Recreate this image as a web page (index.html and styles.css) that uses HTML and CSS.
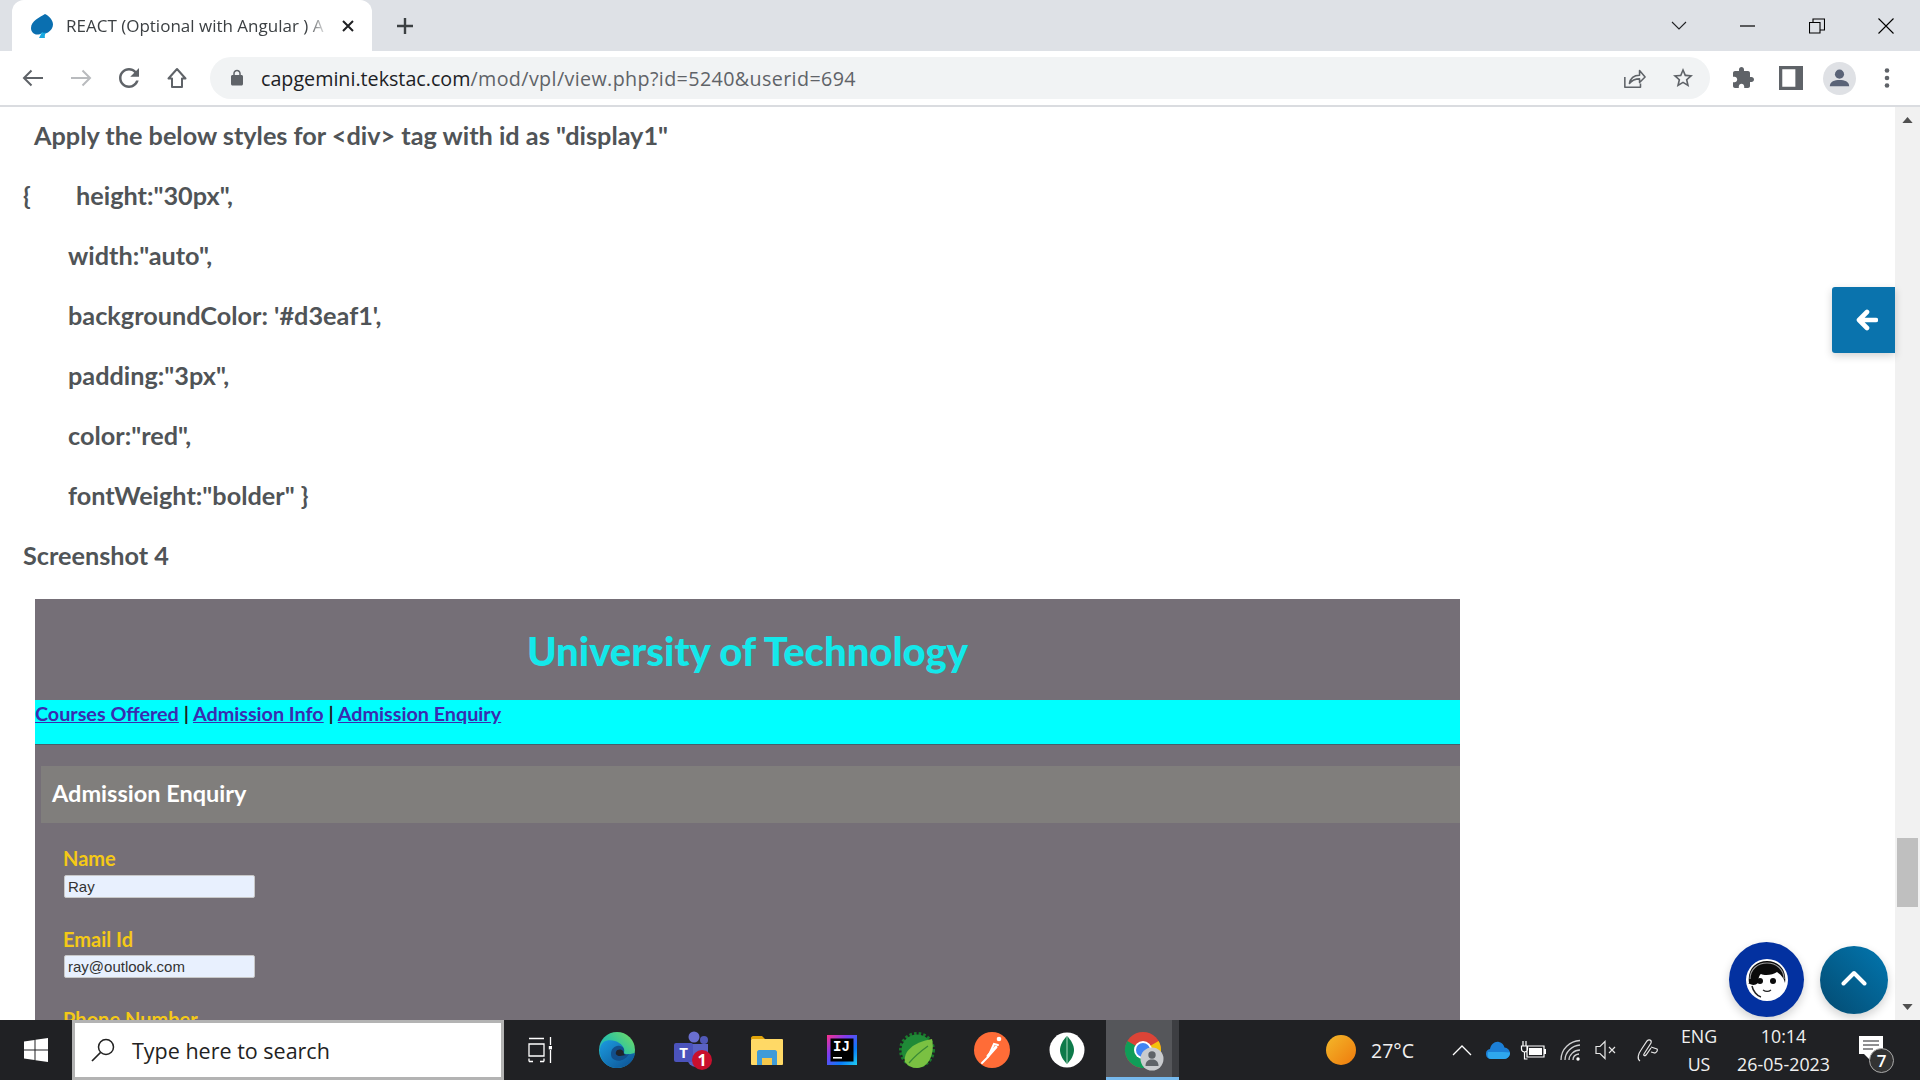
FILE: index.html
```html
<!DOCTYPE html>
<html lang="en">
<head>
<meta charset="utf-8">
<title>REACT (Optional with Angular)</title>
<link rel="stylesheet" href="styles.css">
</head>
<body>
<div class="app">
  <header class="tabstrip">
    <div class="tab">
      <svg class="favicon" viewBox="0 0 24 24"><path fill="#0a6fb0" d="M15 0C10 3 1 7 1 14c0 4 3 6.500 6 6.500 2 0 3.500-.5 5-1.500 2 1 4 .5 6-.5 3-2 5-5 5-8C23 6 19 2 15 0z"/><path fill="#18a9e0" d="M9 24c1-2 2-4 3-6 1.500 1 3 1 5 .5-2 0-2.500 3.500-2 5.500z"/></svg>
      <span class="tab-title">REACT (Optional with Angular ) A</span>
      <svg class="tab-close" viewBox="0 0 14 14"><path d="M2 2l10 10M12 2L2 12" stroke="#202124" stroke-width="2"/></svg>
    </div>
    <svg class="newtab" viewBox="0 0 20 20"><path d="M10 2v16M2 10h16" stroke="#3c4043" stroke-width="2.400"/></svg>
    <div class="winctrls">
      <span class="winbtn"><svg width="16" height="10" viewBox="0 0 16 10"><path d="M1 1l7 7 7-7" fill="none" stroke="#202124" stroke-width="1.100"/></svg></span>
      <span class="winbtn"><svg width="16" height="2" viewBox="0 0 16 2"><path d="M0 1h15" stroke="#000" stroke-width="1.200"/></svg></span>
      <span class="winbtn"><svg width="16" height="16" viewBox="0 0 16 16"><path d="M.5 4.500h10.500v10.500H.5zM4 4.500V1h11.500v11H11" fill="none" stroke="#000" stroke-width="1.100"/></svg></span>
      <span class="winbtn"><svg width="16" height="16" viewBox="0 0 16 16"><path d="M.5.500l15 15M15.500.500l-15 15" stroke="#000" stroke-width="1.100"/></svg></span>
    </div>
  </header>

  <nav class="toolbar">
    <span class="tbtn"><svg viewBox="0 0 24 24"><path d="M22 12H3.500M10.500 4.500L3 12l7.500 7.500" fill="none" stroke="#5f6368" stroke-width="2"/></svg></span>
    <span class="tbtn"><svg viewBox="0 0 24 24"><path d="M2 12h18.500M13.500 4.500L21 12l-7.500 7.500" fill="none" stroke="#b9bbbe" stroke-width="2"/></svg></span>
    <span class="tbtn"><svg class="reload" viewBox="0 0 24 24"><path fill="#5f6368" d="M17.650 6.350C16.200 4.900 14.210 4 12 4c-4.420 0-7.990 3.580-7.990 8s3.570 8 7.990 8c3.730 0 6.840-2.550 7.730-6h-2.080c-.82 2.330-3.040 4-5.650 4-3.310 0-6-2.690-6-6s2.690-6 6-6c1.660 0 3.140.69 4.220 1.780L13 11h7V4l-2.350 2.350z"/></svg></span>
    <span class="tbtn"><svg viewBox="0 0 24 24"><path d="M12 3L3.500 12.500H7V21h10v-8.500h3.500z" fill="none" stroke="#5f6368" stroke-width="2" stroke-linejoin="round"/></svg></span>
    <div class="omnibox">
      <svg class="lock" viewBox="0 0 24 24"><path fill="#5f6368" d="M18 8h-1V6c0-2.760-2.240-5-5-5S7 3.240 7 6v2H6c-1.100 0-2 .9-2 2v10c0 1.100.9 2 2 2h12c1.100 0 2-.9 2-2V10c0-1.100-.9-2-2-2zM9 6c0-1.660 1.340-3 3-3s3 1.340 3 3v2H9V6z"/></svg>
      <span class="url"><b class="host">capgemini.tekstac.com</b><span class="path">/mod/vpl/view.php?id=5240&amp;userid=694</span></span>
      <span class="tbtn"><svg viewBox="0 0 24 24"><path d="M2 11v11h17v-4M7 18c1-6 5-9 11-9V4l6 7-6 6v-4c-5 0-8 1-11 5z" transform="scale(.92) translate(0 1)" fill="none" stroke="#5f6368" stroke-width="1.700" stroke-linejoin="round"/></svg></span>
      <span class="tbtn"><svg viewBox="0 0 24 24"><path fill="#5f6368" d="M22 9.240l-7.190-.62L12 2 9.190 8.630 2 9.240l5.460 4.730L5.820 21 12 17.270 18.180 21l-1.630-7.030L22 9.240zM12 15.400l-3.760 2.270 1-4.280-3.320-2.880 4.380-.38L12 6.100l1.710 4.040 4.380.38-3.320 2.880 1 4.280L12 15.400z"/></svg></span>
    </div>
    <div class="tb-right">
      <span class="tbtn"><svg viewBox="0 0 24 24"><path fill="#5f6368" d="M20.500 11H19V7c0-1.100-.9-2-2-2h-4V3.500C13 2.120 11.880 1 10.500 1S8 2.120 8 3.500V5H4c-1.100 0-1.990.9-1.990 2v3.800H3.500c1.490 0 2.700 1.210 2.700 2.700s-1.210 2.700-2.700 2.700H2V20c0 1.100.9 2 2 2h3.800v-1.500c0-1.490 1.210-2.700 2.700-2.700 1.490 0 2.700 1.210 2.700 2.700V22H17c1.100 0 2-.9 2-2v-4h1.500c1.380 0 2.500-1.120 2.500-2.500S21.880 11 20.500 11z"/></svg></span>
      <span class="tbtn"><svg viewBox="0 0 22 22"><path fill="#5f6368" fill-rule="evenodd" d="M0 0h22v22H0zM3 3v16h12V3z"/></svg></span>
      <span class="tbtn"><svg class="avatar" viewBox="0 0 34 34"><circle cx="17" cy="17" r="17" fill="#dfe1e5"/><circle cx="17" cy="12.500" r="4.700" fill="#5a6377"/><path d="M7 25c0-5 5-6.500 10-6.500s10 1.500 10 6.500z" fill="#5a6377"/></svg></span>
      <span class="tbtn"><svg viewBox="0 0 24 24"><g fill="#5f6368"><circle cx="12" cy="4.500" r="2.300"/><circle cx="12" cy="12" r="2.300"/><circle cx="12" cy="19.500" r="2.300"/></g></svg></span>
    </div>
  </nav>

  <main class="viewport">
    <section class="content">
      <div class="doc">
        <p class="line lead">Apply the below styles for &lt;div&gt; tag with id as <b>"display1"</b></p>
        <p class="line"><span class="brace">{</span>height:"30px",</p>
        <p class="line indent">width:"auto",</p>
        <p class="line indent">backgroundColor: '#d3eaf1',</p>
        <p class="line indent">padding:"3px",</p>
        <p class="line indent">color:"red",</p>
        <p class="line indent">fontWeight:"bolder" }</p>
        <p class="line strong">Screenshot 4</p>
      </div>
      <div class="shot">
        <h1 class="shot-title">University of Technology</h1>
        <div class="shot-nav"><a href="#">Courses Offered</a> | <a href="#">Admission Info</a> | <a href="#">Admission Enquiry</a></div>
        <h2 class="shot-head">Admission Enquiry</h2>
        <form class="shot-form">
          <label class="field"><span class="field-label">Name</span><input class="field-input" value="Ray"></label>
          <label class="field"><span class="field-label">Email Id</span><input class="field-input" value="ray@outlook.com"></label>
          <label class="field"><span class="field-label">Phone Number</span><input class="field-input"></label>
        </form>
      </div>
    </section>
    <aside class="scrollbar">
      <svg class="sb-arrow" viewBox="0 0 12 7"><path d="M6 0l6 7H0z" fill="#505050"/></svg>
      <div class="sb-track"><div class="sb-thumb"></div></div>
      <svg class="sb-arrow" viewBox="0 0 12 7"><path d="M6 7l6-7H0z" fill="#505050"/></svg>
    </aside>
    <button class="side-tab"><svg viewBox="0 0 22 22" width="22" height="22"><path d="M11 3L3 11l8 8M3.500 11H20" fill="none" stroke="#fff" stroke-width="4.600" stroke-linecap="round" stroke-linejoin="round"/></svg></button>
    <button class="fab-agent"><svg viewBox="0 0 42 42" width="42" height="42"><circle cx="21" cy="21" r="21" fill="#fff"/><path d="M3 24C1 10 10 2 21 2s20 8 18 22c-1-5-4-8-8-11-4 3-12 4-16 2-2 1-3 6-3 9-3 3-7 2-10 0z" fill="#0b0b0b"/><path d="M4 20C4 10 12 4 21 4s17 6 17 16" fill="none" stroke="#9a9a9a" stroke-width="1.200"/><circle cx="14" cy="22" r="3" fill="#0b0b0b"/><circle cx="27" cy="22" r="3" fill="#0b0b0b"/><path d="M17 31c3 2 6 1.500 8 0" fill="none" stroke="#222" stroke-width="1.300"/><path d="M6 27c1 5 5 10 9 11" fill="none" stroke="#222" stroke-width="1.500"/></svg></button>
    <button class="fab-top"><svg viewBox="0 0 26 16" width="26" height="16"><path d="M2.500 13.500L13 3l10.500 10.500" fill="none" stroke="#fff" stroke-width="4" stroke-linecap="round" stroke-linejoin="round"/></svg></button>
  </main>

  <footer class="taskbar">
    <span class="start"><svg viewBox="0 0 24 24" width="24" height="24"><path fill="#fff" d="M0 3.500L10.500 2v9.500H0zM11.500 1.800L24 0v11.500H11.500zM0 12.500h10.500V22L0 20.500zM11.500 12.500H24V24l-12.500-1.800z"/></svg></span>
    <div class="searchbox">
      <svg viewBox="0 0 24 24" width="24" height="24"><circle cx="15" cy="9" r="7.500" fill="none" stroke="#222" stroke-width="1.500"/><path d="M9.500 14.500L1 23" stroke="#222" stroke-width="1.700"/></svg>
      <span>Type here to search</span>
    </div>
    <span class="slot slot-taskview"><svg viewBox="0 0 24 28" width="24" height="28"><g fill="none" stroke="#fff" stroke-width="1.300"><path d="M1 2.500h15M1 25.500h4M12 25.500h4M1 25.500v-3M16 25.500v-3M1 8h15v12H1z"/><path d="M22.500 1v8M22.500 14v13"/></g><rect x="20.800" y="10" width="3.400" height="3.400" fill="#fff"/></svg></span>
    <span class="slot"><svg viewBox="0 0 36 36" width="36" height="36"><defs><linearGradient id="e1" x1="0" y1="1" x2="1" y2="0"><stop offset="0" stop-color="#1aa0d8"/><stop offset=".55" stop-color="#2fc4a0"/><stop offset="1" stop-color="#7adf5c"/></linearGradient><linearGradient id="e2" x1="0" y1="0" x2="1" y2="1"><stop offset="0" stop-color="#1b9be0"/><stop offset="1" stop-color="#0d4f8f"/></linearGradient></defs><circle cx="18" cy="18" r="18" fill="url(#e1)"/><path d="M1 17C2 8 10 7 16 9c6 2 10 6 9 12 0 1 3 2 11 0-1 9-9 15-18 15C8 36 0 28 1 17z" fill="url(#e2)"/><path d="M12 22c0-5 4-9 9-8 3 .5 5 3 4 6-1 2 2 3 5 2-3 6-10 8-14 6-3-1-4-3-4-6z" fill="#124f8c"/><path d="M17 20c1-3 5-3 7-1 1 1 0 4 3 4l-6 1c-3 0-5-2-4-4z" fill="#21242a"/></svg></span>
    <span class="slot"><svg viewBox="0 0 40 40" width="40" height="40"><circle cx="22" cy="7" r="5.500" fill="#6a6fd0"/><circle cx="32" cy="10" r="4" fill="#5159b8"/><path d="M15 14h21v14a9 9 0 0 1-9 9h-3a9 9 0 0 1-9-9z" fill="#5a62c4"/><rect x="2" y="13" width="19" height="19" rx="2" fill="#4b53bc"/><text class="ico-t" x="11.500" y="28" font-size="15" fill="#fff" text-anchor="middle">T</text><circle cx="30" cy="30" r="10" fill="#c8102e"/><text class="ico-t" x="30" y="36" font-size="16" fill="#fff" text-anchor="middle">1</text></svg></span>
    <span class="slot"><svg viewBox="0 0 34 34" width="34" height="34"><path d="M1 5c0-1 1-2 2-2h9l3 3h-14z" fill="#e2a50a"/><rect x="1" y="6" width="32" height="26" rx="1" fill="#ffd966"/><path d="M7 32V19c0-1 1-2 2-2h16c1 0 2 1 2 2v13h-5v-7H12v7z" fill="#3f9bd8"/><rect x="12" y="25" width="10" height="7" fill="#f5c84c"/></svg></span>
    <span class="slot"><svg viewBox="0 0 30 30" width="30" height="30"><defs><linearGradient id="ij" x1="0" y1="0" x2="1" y2="1"><stop offset="0" stop-color="#fc318c"/><stop offset=".35" stop-color="#7d3cf0"/><stop offset=".7" stop-color="#087cfa"/><stop offset="1" stop-color="#21d0f0"/></linearGradient></defs><rect width="30" height="30" fill="url(#ij)"/><rect x="3.500" y="3.500" width="23" height="23" fill="#000"/><text class="ico-m" x="6" y="16" font-size="14" fill="#fff">IJ</text><rect x="6" y="22" width="9" height="1.600" fill="#fff"/></svg></span>
    <span class="slot"><svg viewBox="0 0 36 44" width="36" height="44"><circle cx="18" cy="22" r="16" fill="none" stroke="#1a7a2c" stroke-width="4" stroke-dasharray="2.500 2"/><circle cx="18" cy="22" r="15.500" fill="#1f8a37"/><path d="M6 34C4 24 14 14 33 11c3 14-3 29-15 29-5 0-9-2-12-6z" fill="#7ac142"/><path d="M10 35c5-6 12-12 19-17" fill="none" stroke="#3a8a36" stroke-width="1.300"/></svg></span>
    <span class="slot"><svg viewBox="0 0 36 44" width="36" height="44"><circle cx="18" cy="22" r="18" fill="#ff6c37"/><g stroke="#fff" fill="none" stroke-linecap="round"><path d="M8 35l6-6 6-13 4 1" stroke-width="2"/><path d="M14 28l8-9" stroke-width="3"/></g><circle cx="25" cy="11" r="2.300" fill="#fff"/></svg></span>
    <span class="slot"><svg viewBox="0 0 36 44" width="36" height="44"><circle cx="18" cy="22" r="17.500" fill="#fff"/><path d="M18 8c4 4 7 9 7 14 0 5-3 10-7 14-4-4-7-9-7-14 0-5 3-10 7-14z" fill="#0e7a4a"/><path d="M18 8v28" stroke="#a9d8bd" stroke-width="1"/></svg></span>
    <span class="slot slot-active"><svg viewBox="-6 -6 48 48" width="48" height="48"><circle cx="18" cy="18" r="18" fill="#db4437"/><path d="M18 18L33.600 9A18 18 0 0 1 30 31.400z" fill="#f4c20d"/><path d="M18 18L30 31.400A18 18 0 0 1 2.400 27 18 18 0 0 1 2.400 9z" fill="#0f9d58"/><circle cx="18" cy="18" r="9" fill="#fff"/><circle cx="18" cy="18" r="7" fill="#4285f4"/><circle cx="27" cy="27" r="11.500" fill="#c9cbce"/><circle cx="27" cy="23" r="3.700" fill="#5f6368"/><path d="M20.500 34c0-5 3-6.500 6.500-6.500s6.500 1.500 6.500 6.500z" fill="#5f6368"/></svg></span>
    <div class="tray">
      <span class="sun"></span>
      <span class="temp">27°C</span>
      <svg class="t-chev" viewBox="0 0 20 12"><path d="M1 11l9-9 9 9" fill="none" stroke="#fff" stroke-width="1.300"/></svg>
      <svg class="t-cloud" viewBox="0 0 24 18"><path d="M5 18a5 5 0 0 1-1-9.900C5 3 9 0 13 1c3 .7 5 3 5.500 5.500A5.800 5.800 0 0 1 24 12c0 3.500-2.500 6-6 6z" fill="#1c7fd6"/><path d="M2 11h15l7 .5c0 3.500-2.500 6.500-6 6.500H5c-3 0-4-3-3-7z" fill="#2ea7ee"/></svg>
      <svg class="t-batt" viewBox="0 0 26 20"><g fill="none" stroke="#fff" stroke-width="1.200"><path d="M7 6h17v11H7zM3 1v5M6 1v5M1.500 6h6v3a3 3 0 0 1-6 0zM4.500 12v7h3"/></g><rect x="9" y="8" width="13" height="7" fill="#fff"/><rect x="24" y="9" width="2" height="5" fill="#fff"/></svg>
      <svg class="t-wifi" viewBox="0 0 22 22"><g fill="none" stroke="#cfd0d2" stroke-width="1.300"><path d="M1 21C1 10 10 2 20 1.500M5 21C5 13 12 6.500 20 6M9 21c0-5 5-10 11-10M13 21c0-3 2-5.500 6-6"/></g><circle cx="18" cy="20" r="1.700" fill="#fff"/></svg>
      <svg class="t-spk" viewBox="0 0 22 20"><path d="M1 6.500h4L10 1.500v17L5 13.500H1z" fill="none" stroke="#e6e6e6" stroke-width="1.200"/><path d="M14 7l6 6M20 7l-6 6" stroke="#e6e6e6" stroke-width="1.200"/></svg>
      <svg class="t-pen" viewBox="0 0 22 24"><path d="M3 23c-3-2-2-7 1-11l6-9c2-2 5-1 4 2l-7 11c-1 2 1 2 2 1l5-7" fill="none" stroke="#e6e6e6" stroke-width="1.200"/><path d="M14 9l6 2c1 1 0 3-2 4l-4-1" fill="none" stroke="#e6e6e6" stroke-width="1.200"/></svg>
      <div class="lang"><span>ENG</span><span>US</span></div>
      <div class="clock"><span>10:14</span><span>26-05-2023</span></div>
      <div class="notif">
        <svg viewBox="0 0 24 28" width="24" height="28"><path d="M0 0h24v18H13v8l-8-8H0z" fill="#fff"/><path d="M4 5h16M4 9h16M4 13h10" stroke="#202124" stroke-width="1.200"/></svg>
        <span class="notif-badge">7</span>
      </div>
    </div>
  </footer>
</div>
</body>
</html>
```

FILE: styles.css
```css
* { box-sizing: border-box; }
html, body { margin: 0; padding: 0; height: 100%; overflow: hidden; }
body { font-family: "Open Sans", "Noto Sans", sans-serif; background: #fff; }
p, h1, h2 { margin: 0; }
b { font-weight: inherit; }
svg { display: block; flex: none; }

.app { display: flex; flex-direction: column; width: 1920px; height: 1080px; }

/* browser tab strip */
.tabstrip { display: flex; align-items: center; height: 51px; padding-left: 12px; background: #dee1e6; flex: none; }
.tab { display: flex; align-items: center; width: 360px; height: 51px; padding-left: 18px; background: #fff; border-radius: 12px 12px 0 0; }
.favicon { width: 24px; height: 24px; }
.tab-title { width: 262px; margin-left: 12px; font-family: "Open Sans", sans-serif; font-size: 17px; color: #3c4043; white-space: nowrap; -webkit-mask-image: linear-gradient(90deg, #000 92%, transparent); mask-image: linear-gradient(90deg, #000 92%, transparent); }
.tab-close { width: 14px; height: 14px; margin-left: 13px; }
.newtab { width: 20px; height: 20px; margin-left: 23px; }
.winctrls { display: flex; margin-left: auto; }
.winbtn { display: flex; align-items: center; justify-content: center; width: 69px; height: 42px; }

/* toolbar */
.toolbar { display: flex; align-items: center; height: 56px; padding-left: 9px; background: #fff; border-bottom: 2px solid #dadce0; flex: none; }
.tbtn { display: flex; align-items: center; justify-content: center; width: 48px; height: 42px; flex: none; }
.tbtn svg { width: 24px; height: 24px; }
.tbtn svg.avatar { width: 33px; height: 33px; }
.tbtn svg.reload { width: 30px; height: 30px; }
.omnibox { display: flex; align-items: center; width: 1500px; height: 42px; margin-left: 9px; padding: 0 3px 0 18px; background: #f1f3f4; border-radius: 21px; }
.lock { width: 18px; height: 18px; }
.url { flex: 1; margin-left: 15px; font-family: "Open Sans", sans-serif; font-size: 19.700px; color: #5f6368; white-space: nowrap; }
.host { color: #202124; }
.path { letter-spacing: .38px; }
.tb-right { display: flex; margin-left: 9px; }

/* page */
.viewport { position: relative; display: flex; flex: 1; min-height: 0; overflow: hidden; }
.content { flex: 1; min-width: 0; overflow: hidden; }
.doc { padding: 10px 0 0 23px; }
.line { height: 36px; margin-bottom: 24px; font-family: "Lato", sans-serif; font-size: 25.250px; font-weight: 700; line-height: 36px; color: #505457; white-space: pre-wrap; }
.lead { padding-left: 11px; }
.indent { padding-left: 45px; }
.brace { display: inline-block; width: 53px; }
.strong { margin-bottom: 26px; }

.shot { width: 1425px; height: 500px; margin-left: 35px; background: #756f77; font-family: "Lato", sans-serif; }
.shot-title { height: 101px; padding-top: 26px; font-size: 40px; line-height: 52px; font-weight: 900; color: #14e8ea; text-align: center; }
.shot-nav { height: 45px; font-size: 19.750px; font-weight: 700; line-height: 28px; color: #222; background: #00ffff; border-bottom: 1px solid #45606a; }
.shot-nav a { color: #3a2cb0; text-decoration: underline; }
.shot-head { height: 57px; margin: 21px 0 0 6px; padding-left: 11px; background: #807e7c; font-size: 23.500px; font-weight: 700; line-height: 55px; color: #fff; }
.shot-form { display: flex; flex-direction: column; gap: 29px; margin-top: 23px; padding-left: 28px; }
.field { display: flex; flex-direction: column; gap: 4px; align-items: flex-start; }
.field:first-child { gap: 5px; }
.field-label { font-size: 20px; font-weight: 700; line-height: 24px; color: #f4c916; }
.field-input { width: 191px; height: 23px; margin-left: 1px; padding: 0 3px 1px; border: 1px solid #c8c8c8; border-radius: 2px; background: #e8f0fe; font-family: "Liberation Sans", sans-serif; font-size: 15px; color: #333; }

/* scrollbar */
.scrollbar { display: flex; flex-direction: column; align-items: center; width: 25px; padding: 10px 0; background: #f1f1f1; flex: none; }
.sb-arrow { width: 11px; height: 6px; }
.sb-track { position: relative; flex: 1; width: 100%; }
.sb-thumb { position: absolute; top: 715px; left: 2px; right: 2px; height: 69px; background: #bfbfbf; }

/* floating buttons */
.side-tab { position: absolute; top: 180px; left: 1832px; display: flex; align-items: center; justify-content: center; width: 63px; height: 66px; padding: 0 0 0 6px; border: 0; border-radius: 3px 0 0 3px; background: #0a73ad; box-shadow: 0 3px 8px rgba(0,0,0,.18); }
.fab-agent { position: absolute; top: 835px; left: 1729px; display: flex; align-items: center; justify-content: center; width: 75px; height: 75px; padding: 0; border: 0; border-radius: 50%; background: #0331a0; box-shadow: 0 4px 10px rgba(0,0,0,.18); }
.fab-top { position: absolute; top: 839px; left: 1820px; display: flex; align-items: center; justify-content: center; width: 68px; height: 68px; padding: 0 0 4px; border: 0; border-radius: 50%; background: linear-gradient(45deg, #044a70, #0277b0); box-shadow: 0 4px 10px rgba(0,0,0,.18); }

/* taskbar */
.taskbar { display: flex; align-items: stretch; height: 60px; background: #202124; color: #fff; flex: none; }
.start { display: flex; align-items: center; justify-content: center; width: 72px; }
.searchbox { display: flex; align-items: center; gap: 17px; width: 432px; padding-left: 16px; background: #fff; border: 3px solid #b3b3b3; color: #222; font-size: 21.500px; }
.slot { display: flex; align-items: center; justify-content: center; width: 75px; }
.slot-taskview { padding-right: 3px; }
.slot-active { width: 73px; margin-left: 2px; padding-top: 3px; background: linear-gradient(90deg, #55565a 66px, #3d3e42 66px); border-bottom: 3px solid #76b9ed; }
.ico-t { font-family: "Open Sans", sans-serif; font-weight: 700; }
.ico-m { font-family: "Liberation Mono", monospace; font-weight: 700; }

.tray { display: flex; align-items: center; margin-left: auto; padding-right: 37px; }
.sun { width: 30px; height: 30px; margin-right: 15px; border-radius: 50%; background: linear-gradient(135deg, #f3b82a, #ef7a0c); }
.temp { width: 43px; font-size: 19.500px; white-space: nowrap; color: #f0f0f0; }
.t-chev { width: 20px; height: 12px; margin-left: 38px; }
.t-cloud { width: 24px; height: 18px; margin-left: 14px; }
.t-batt { width: 26px; height: 20px; margin-left: 10px; }
.t-wifi { width: 22px; height: 22px; margin-left: 14px; }
.t-spk { width: 22px; height: 20px; margin-left: 13px; }
.t-pen { width: 22px; height: 24px; margin-left: 20px; }
.lang, .clock { display: flex; flex-direction: column; align-items: center; gap: 4px; font-size: 17.800px; line-height: 24px; color: #f0f0f0; }
.lang { width: 40px; margin-left: 20px; }
.clock { width: 97px; margin-left: 16px; }
.notif { position: relative; width: 24px; height: 28px; margin-left: 27px; }
.notif-badge { position: absolute; top: 12px; left: 10px; display: flex; align-items: center; justify-content: center; width: 25px; height: 25px; border-radius: 50%; border: 1px solid #aaa; background: #333; font-size: 17px; font-weight: 600; color: #fff; }
```
